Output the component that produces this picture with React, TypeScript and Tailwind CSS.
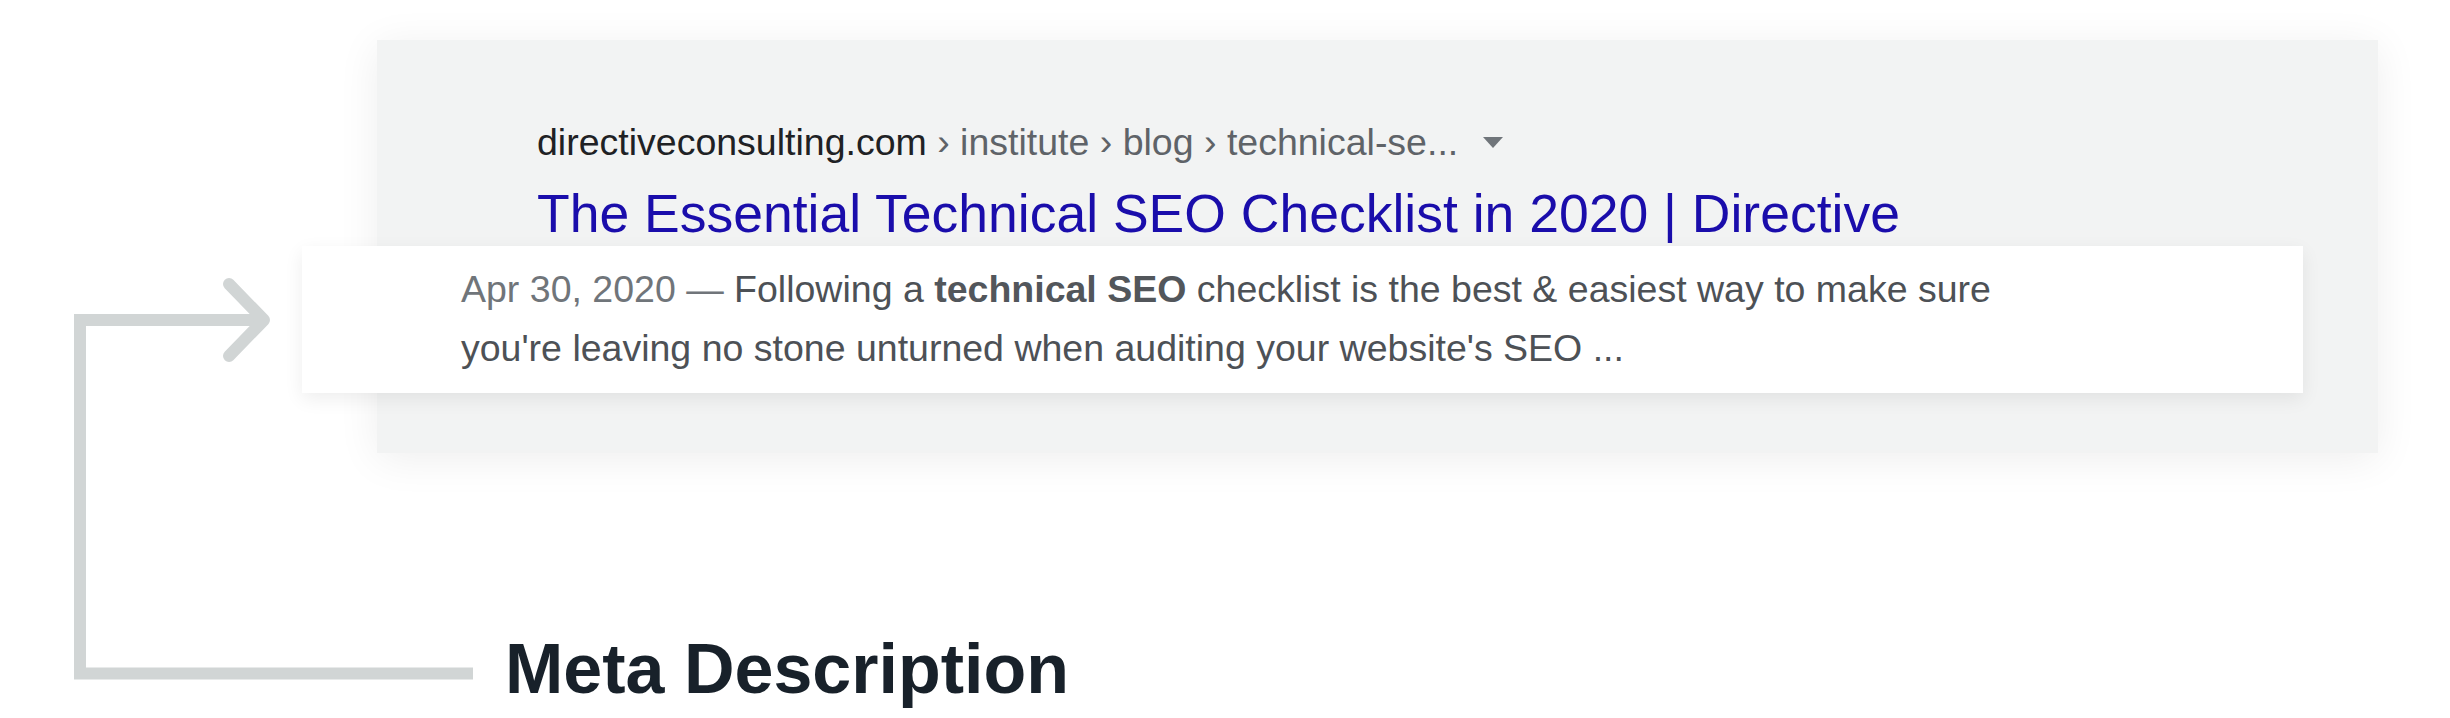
import React from "react";

export default function App() {
  return (
    <div className="relative w-[2450px] h-[718px] overflow-hidden bg-white font-['Liberation_Sans',Arial,sans-serif]">
      <svg
        className="absolute left-0 top-0"
        width="500"
        height="718"
        viewBox="0 0 500 718"
        fill="none"
      >
        <path
          d="M 473 673.5 H 80 V 320 H 264"
          stroke="#d1d5d5"
          strokeWidth="12"
          strokeLinejoin="miter"
          strokeLinecap="butt"
        />
        <path
          d="M 229 284 L 264 320 L 229 356"
          stroke="#d1d5d5"
          strokeWidth="12"
          strokeLinejoin="round"
          strokeLinecap="round"
        />
      </svg>

      <div className="relative ml-[377px] mt-[40px] w-[2001px] h-[413px] bg-[#f2f3f3] pl-[160px] pt-[78px] shadow-[0_6px_40px_rgba(0,0,0,0.07)]">
        <div className="flex items-center h-[48px] text-[37.5px] leading-[48px] whitespace-nowrap">
          <span className="text-[#202124]">directiveconsulting.com</span>
          <span className="text-[#5f6368]">&nbsp;› institute › blog › technical-se...</span>
          <span className="ml-[25px] w-0 h-0 border-l-[10px] border-r-[10px] border-t-[11px] border-l-transparent border-r-transparent border-t-[#70757a]" />
        </div>
        <div className="mt-[16px] h-[64px] text-[53.5px] leading-[64px] text-[#1a0dab] whitespace-nowrap">
          The Essential Technical SEO Checklist in 2020 | Directive
        </div>
      </div>

      <div className="absolute left-[302px] top-[246px] w-[2001px] h-[147px] bg-white pl-[159px] pt-[14px] shadow-[0_6px_18px_rgba(0,0,0,0.07)]">
        <p className="text-[37.5px] leading-[59px] text-[#4d5156] whitespace-nowrap">
          <span className="text-[#70757a]">Apr 30, 2020 — </span>
          Following a <b className="font-bold text-[#52565b]">technical SEO</b> checklist is the best &amp; easiest way to make sure
          <br />
          you're leaving no stone unturned when auditing your website's SEO ...
        </p>
      </div>

      <div className="ml-[505px] mt-[176px] h-[80px] text-[70px] leading-[80px] font-bold text-[#18212a] whitespace-nowrap">
        Meta Description
      </div>
    </div>
  );
}
